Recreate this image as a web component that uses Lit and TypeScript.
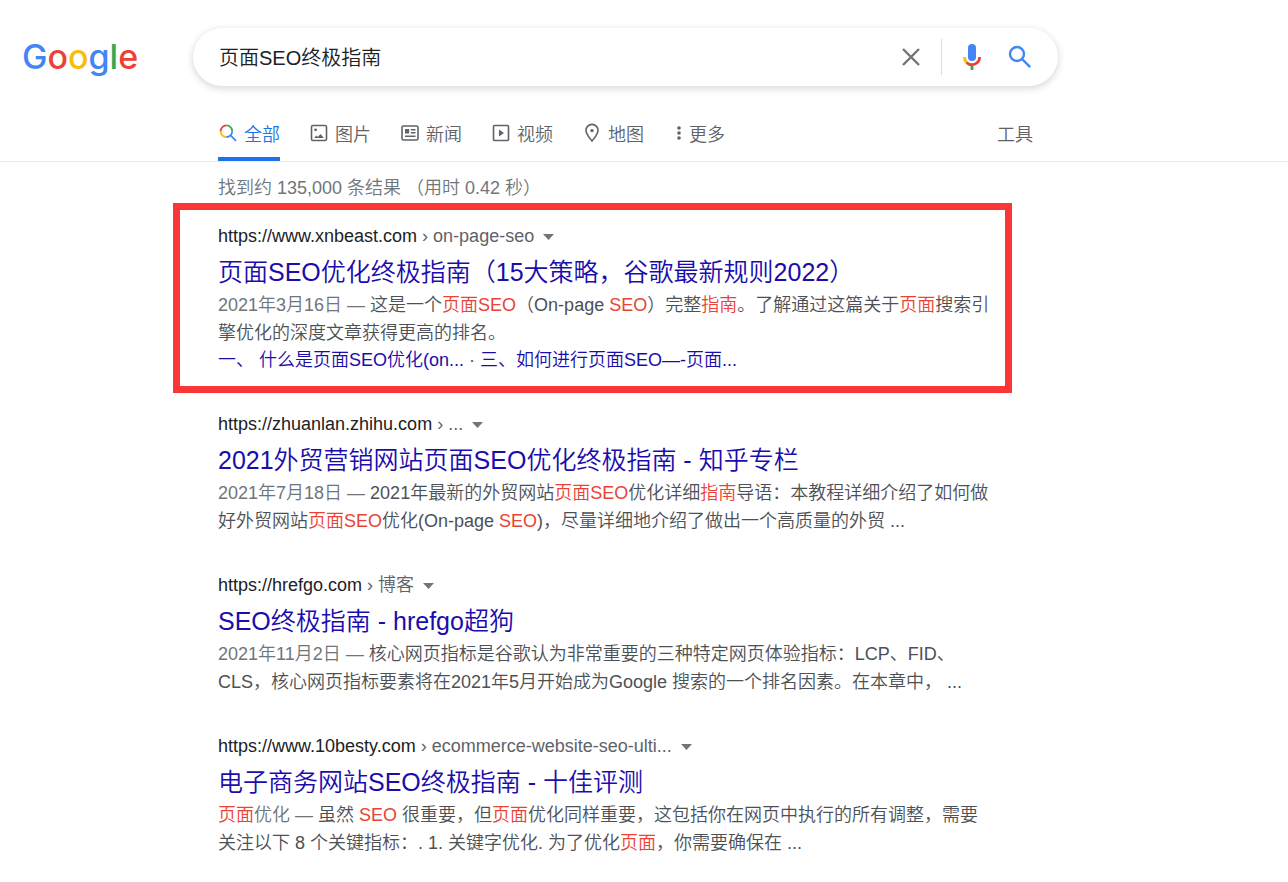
import { LitElement, html, svg, css, nothing } from "lit";
import { customElement, property } from "lit/decorators.js";

interface Result {
  site: string;
  path: string;
  title: string;
  snippet: unknown;
  links?: string[];
  marked?: boolean;
}

const date = (s: string) => html`<span class="date">${s} — </span>`;
const em = (s: string) => html`<em>${s}</em>`;

const results: Result[] = [
  {
    site: "https://www.xnbeast.com",
    path: "on-page-seo",
    title: "页面SEO优化终极指南（15大策略，谷歌最新规则2022）",
    snippet: html`${date("2021年3月16日")}这是一个${em("页面SEO")}（On-page ${em("SEO")}）完整${em("指南")}。了解通过这篇关于${em("页面")}搜索引擎优化的深度文章获得更高的排名。`,
    links: ["一、 什么是页面SEO优化(on...", "三、如何进行页面SEO—-页面..."],
    marked: true,
  },
  {
    site: "https://zhuanlan.zhihu.com",
    path: "...",
    title: "2021外贸营销网站页面SEO优化终极指南 - 知乎专栏",
    snippet: html`${date("2021年7月18日")}2021年最新的外贸网站${em("页面SEO")}优化详细${em("指南")}导语：本教程详细介绍了如何做好外贸网站${em("页面SEO")}优化(On-page ${em("SEO")})，尽量详细地介绍了做出一个高质量的外贸 ...`,
  },
  {
    site: "https://hrefgo.com",
    path: "博客",
    title: "SEO终极指南 - hrefgo超狗",
    snippet: html`${date("2021年11月2日")}核心网页指标是谷歌认为非常重要的三种特定网页体验指标：LCP、FID、CLS，核心网页指标要素将在2021年5月开始成为Google 搜索的一个排名因素。在本章中， ...`,
  },
  {
    site: "https://www.10besty.com",
    path: "ecommerce-website-seo-ulti...",
    title: "电子商务网站SEO终极指南 - 十佳评测",
    snippet: html`<span class="date">${em("页面")}优化 — </span>虽然 ${em("SEO")} 很重要，但${em("页面")}优化同样重要，这包括你在网页中执行的所有调整，需要关注以下 8 个关键指标：. 1. 关键字优化. 为了优化${em("页面")}，你需要确保在 ...`,
  },
];

const glyphs: Record<string, unknown> = {
  all: svg`<g fill="none" stroke-width="1.8">
    <path stroke="#ea4335" d="M2.7 8.2A5.8 5.8 0 0 1 8.4 2.4"/>
    <path stroke="#34a853" d="M8.4 2.4A5.8 5.8 0 0 1 14.2 8.2"/>
    <path stroke="#fbbc04" d="M2.6 8.2A5.8 5.8 0 0 0 8.4 14"/>
    <path stroke="#4285f4" d="M8.4 14A5.8 5.8 0 0 0 14.2 8.2M12.4 12.2L18 17.8"/></g>`,
  image: svg`<rect x="2.5" y="2.5" width="15" height="15" rx="1.5" fill="none" stroke="currentColor" stroke-width="1.6"/>
    <circle cx="6.6" cy="6.8" r="1.4" fill="currentColor"/><path fill="currentColor" d="M5.2 15l2.2-2.4 1.5 1.3 2.6-2.8 3.4 3.9z"/>`,
  news: svg`<rect x="2" y="3" width="16" height="14" rx="1.5" fill="none" stroke="currentColor" stroke-width="1.6"/>
    <path fill="currentColor" d="M5 6h4.2v4.6H5zM10.8 6H15.5v1.6h-4.7zM10.8 9H15.5v1.6h-4.7zM5 12.4h10.5V14H5z"/>`,
  video: svg`<rect x="2.5" y="2.5" width="15" height="15" rx="1" fill="none" stroke="currentColor" stroke-width="1.6"/>
    <path fill="currentColor" d="M8 6.4l5 3.6-5 3.6z"/>`,
  pin: svg`<path fill="none" stroke="currentColor" stroke-width="1.6" d="M10 18C7 14 4 11 4 7.4a6 6 0 0 1 12 0C16 11 13 14 10 18z"/>
    <circle cx="10" cy="7.6" r="1.7" fill="currentColor"/>`,
};

const tabs = [
  ["all", "全部"],
  ["image", "图片"],
  ["news", "新闻"],
  ["video", "视频"],
  ["pin", "地图"],
];

@customElement("search-result")
class SearchResult extends LitElement {
  @property({ attribute: false }) data!: Result;

  static styles = css`
    :host { display: block; }
    .result { position: relative; }
    .marked::after {
      content: "";
      position: absolute;
      inset: -19px -18px -19px -45px;
      border: 7px solid #fb3636;
      pointer-events: none;
    }
    .source { display: flex; align-items: center; line-height: 28px; }
    .site { color: #202124; text-decoration: none; }
    .path { color: #5f6368; }
    .menu { display: flex; border: 0; padding: 2px 0 0; margin-left: 9px; background: none; color: #70757a; }
    h3 { margin: 0; padding-top: 3px; font-size: 25px; line-height: 38px; font-weight: inherit; }
    h3 a, .links a { color: #1a0dab; text-decoration: none; }
    p { margin: 0; line-height: 28px; color: #4d5156; overflow-wrap: break-word; }
    .date { color: #70757a; }
    em { font-style: normal; color: #ea4335; }
    .links { line-height: 27px; color: #4d5156; }
  `;

  render() {
    const r = this.data;
    return html`<article class="result ${r.marked ? "marked" : ""}">
      <div class="source">
        <a class="site" href="#">${r.site}<span class="path"> › ${r.path}</span></a>
        <button class="menu" aria-label="更多信息">
          <svg width="11" height="6" viewBox="0 0 11 6"><path fill="currentColor" d="M0 0h11L5.5 6z"/></svg>
        </button>
      </div>
      <h3><a href="#">${r.title}</a></h3>
      <p>${r.snippet}</p>
      ${r.links
        ? html`<div class="links"><a href="#">${r.links[0]}</a> · <a href="#">${r.links[1]}</a></div>`
        : nothing}
    </article>`;
  }
}

@customElement("app-root")
class AppRoot extends LitElement {
  static styles = css`
    :host {
      display: block;
      min-height: 100vh;
      background: #fff;
      color: #202124;
      font-family: "Liberation Sans", "Noto Sans CJK SC", sans-serif;
      font-size: 18px;
      font-weight: 350;
    }
    * { box-sizing: border-box; }
    button, input { font: inherit; }
    .top { display: flex; align-items: center; padding: 28px 24px 0 22px; }
    .logo { flex: none; width: 171px; font: 500 34px/58px Inter, sans-serif; text-decoration: none; }
    .blue { color: #4285f4; }
    .red { color: #ea4335; }
    .yellow { color: #fbbc05; }
    .green { color: #34a853; }
    .search {
      display: flex;
      align-items: center;
      flex: 0 1 865px;
      height: 58px;
      padding: 0 24px 0 26px;
      border-radius: 29px;
      box-shadow: 0 2px 6px 1px rgba(64, 60, 67, 0.18);
    }
    .search input {
      flex: 1;
      min-width: 0;
      border: 0;
      padding: 2px 0 0;
      outline: 0;
      background: none;
      color: #202124;
      font-size: 20px;
      line-height: 30px;
    }
    .icon { display: flex; border: 0; padding: 0; background: none; }
    .split { width: 1px; height: 36px; margin: 0 16px 0 17px; background: #dadce0; }
    .gap { margin-left: 20px; }
    nav {
      display: flex;
      gap: 29px;
      height: 76px;
      padding-left: 218px;
      border-bottom: 1px solid #ebebeb;
    }
    .tab {
      display: flex;
      align-items: center;
      gap: 6px;
      height: 75px;
      padding: 22px 0 0;
      color: #5f6368;
      text-decoration: none;
      border: 0;
      border-bottom: 4px solid transparent;
      background: none;
      white-space: nowrap;
    }
    .tab svg { flex: none; }
    .active { color: #1a73e8; border-bottom-color: #1a73e8; }
    .tools { margin-left: 243px; }
    main { padding: 12px 24px 24px 218px; }
    .stats { line-height: 28px; color: #70757a; }
    .list { display: grid; gap: 36px; max-width: 776px; margin-top: 20px; }
  `;

  render() {
    return html`
      <header>
        <div class="top">
          <a class="logo" href="#" aria-label="Google"
            ><span class="blue">G</span><span class="red">o</span><span class="yellow">o</span
            ><span class="blue">g</span><span class="green">l</span><span class="red">e</span></a>
          <form class="search" role="search">
            <input type="text" aria-label="搜索" value="页面SEO终极指南" />
            <button class="icon" type="reset" aria-label="清除">
              <svg width="26" height="26" viewBox="0 0 26 26"><path d="M5 5L21 21M21 5L5 21" stroke="#70757a" stroke-width="2.4"/></svg>
            </button>
            <span class="split"></span>
            <button class="icon" type="button" aria-label="语音搜索">
              <svg width="28" height="30" viewBox="0 0 28 30">
                <rect x="10" y="2" width="8" height="17" rx="4" fill="#4285f4"/>
                <path fill="#34a853" d="M12.6 23h2.8v5h-2.8z"/>
                <path fill="none" stroke="#fbbc04" stroke-width="2.8" d="M6.4 15a7.6 7.6 0 0 0 2.3 5.5"/>
                <path fill="none" stroke="#ea4335" stroke-width="2.8" d="M8.6 20.4A7.6 7.6 0 0 0 21.6 15"/>
              </svg>
            </button>
            <button class="icon gap" type="button" aria-label="Google 搜索">
              <svg width="28" height="28" viewBox="0 0 28 28" fill="none" stroke="#4285f4" stroke-width="2.4">
                <circle cx="11" cy="11" r="7"/><path d="M16 16L24.2 24.2"/>
              </svg>
            </button>
          </form>
        </div>
        <nav>
          ${tabs.map(
            ([icon, label], i) => html`<a class="tab ${i === 0 ? "active" : ""}" href="#">
              <svg width="20" height="20" viewBox="0 0 20 20">${glyphs[icon]}</svg>${label}</a>`
          )}
          <button class="tab">
            <svg width="10" height="20" viewBox="0 0 10 20" fill="currentColor">
              <circle cx="6" cy="5" r="1.8"/><circle cx="6" cy="10" r="1.8"/><circle cx="6" cy="15" r="1.8"/>
            </svg>更多
          </button>
          <button class="tab tools">工具</button>
        </nav>
      </header>
      <main>
        <div class="stats">找到约 135,000 条结果 （用时 0.42 秒）</div>
        <div class="list">${results.map((r) => html`<search-result .data=${r}></search-result>`)}</div>
      </main>
    `;
  }
}
